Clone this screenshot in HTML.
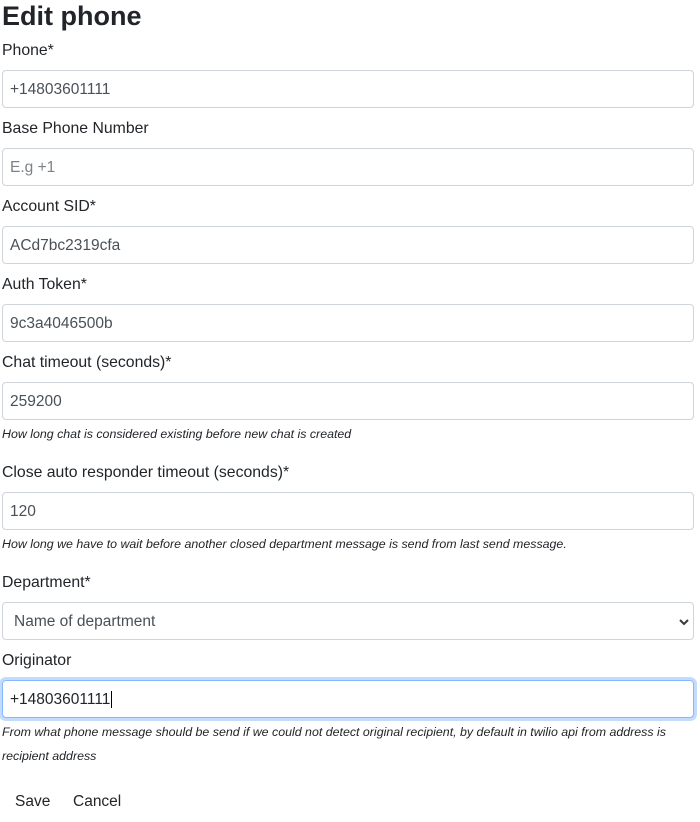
<!DOCTYPE html>
<html><head><style>
body{margin:0;width:700px;height:822px;background:#fff;font-family:"Liberation Sans",sans-serif;color:#212529;position:relative;overflow:hidden}
.a{position:absolute;white-space:nowrap}
h1{position:absolute;left:2px;top:-1px;margin:0;font-size:27px;font-weight:600;line-height:34px}
.l{font-size:15.8px;line-height:20px;left:2px}
.i{left:2px;width:690px;height:36px;border:1px solid #ced4da;border-radius:4px;box-sizing:content-box;font-size:15.5px;color:#495057;line-height:38px;text-indent:7px}
.h{font-size:12.4px;font-style:italic;left:2px;line-height:24px}
</style></head><body>
<h1>Edit phone</h1>
<div class="a l" style="top:41px">Phone*</div>
<div class="a i" style="top:70px">+14803601111</div>
<div class="a l" style="top:119px">Base Phone Number</div>
<div class="a i" style="top:148px;color:#7b8289">E.g +1</div>
<div class="a l" style="top:197px">Account SID*</div>
<div class="a i" style="top:226px">ACd7bc2319cfa</div>
<div class="a l" style="top:275px">Auth Token*</div>
<div class="a i" style="top:304px">9c3a4046500b</div>
<div class="a l" style="top:353px">Chat timeout (seconds)*</div>
<div class="a i" style="top:382px">259200</div>
<div class="a h" style="top:422px">How long chat is considered existing before new chat is created</div>
<div class="a l" style="top:463px">Close auto responder timeout (seconds)*</div>
<div class="a i" style="top:492px">120</div>
<div class="a h" style="top:532px">How long we have to wait before another closed department message is send from last send message.</div>
<div class="a l" style="top:573px">Department*</div>
<div class="a i" style="top:602px;text-indent:11px">Name of department
<svg style="position:absolute;right:4px;top:15px" width="10" height="8" viewBox="0 0 10 8"><path d="M1 2l4 4 4-4" fill="none" stroke="#343a40" stroke-width="2"/></svg></div>
<div class="a l" style="top:651px">Originator</div>
<div class="a i" style="top:680px;border-color:#86b7fe;box-shadow:0 0 0 3px rgba(13,110,253,.25);text-indent:7px;color:#212529">+14803601111<span style="border-left:1px solid #000;margin-left:1px"></span></div>
<div class="a h" style="top:720px">From what phone message should be send if we could not detect original recipient, by default in twilio api from address is</div>
<div class="a h" style="top:744px">recipient address</div>
<div class="a" style="top:792px;left:15px;font-size:15.5px;line-height:20px">Save</div>
<div class="a" style="top:792px;left:73px;font-size:15.5px;line-height:20px">Cancel</div>
</body></html>
